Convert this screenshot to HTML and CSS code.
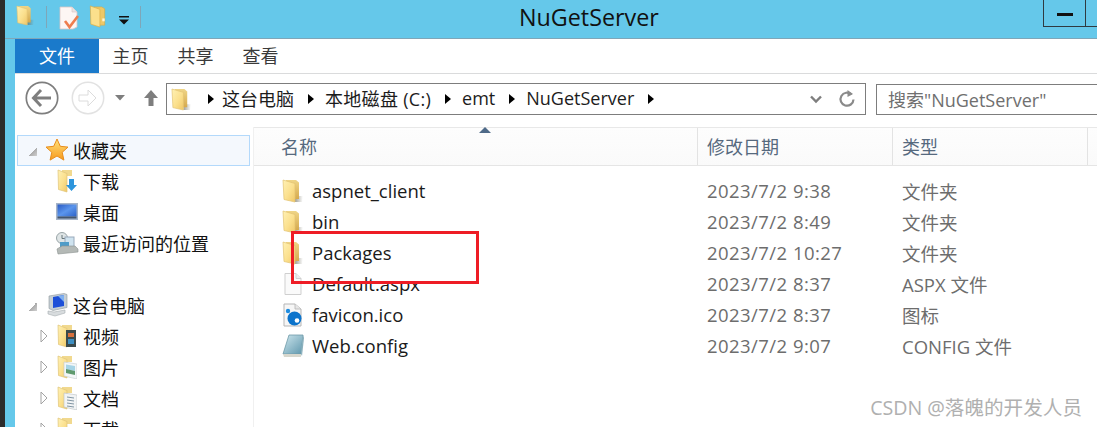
FILE: index.html
```html
<!DOCTYPE html>
<html lang="zh-CN">
<head>
<meta charset="utf-8">
<title>NuGetServer</title>
<link rel="stylesheet" href="styles.css">
</head>
<body>
<svg class="defs" aria-hidden="true">
  <defs>
    <linearGradient id="leaf" x1="0" y1="0" x2="1" y2="1">
      <stop offset="0" stop-color="#fff1b4"/><stop offset=".55" stop-color="#fbe08e"/><stop offset="1" stop-color="#efc767"/>
    </linearGradient>
    <linearGradient id="back" x1="0" y1="0" x2="0" y2="1">
      <stop offset="0" stop-color="#efd587"/><stop offset="1" stop-color="#d6aa4e"/>
    </linearGradient>
    <linearGradient id="shade" x1="0" y1="0" x2="1" y2="0">
      <stop offset="0" stop-color="#5c5c50" stop-opacity=".6"/><stop offset="1" stop-color="#6c6c5c" stop-opacity="0"/>
    </linearGradient>
    <linearGradient id="screen" x1="0" y1="0" x2="1" y2="1">
      <stop offset="0" stop-color="#2a5bc4"/><stop offset=".5" stop-color="#5b95ec"/><stop offset="1" stop-color="#2d62c8"/>
    </linearGradient>
    <linearGradient id="star" x1="0" y1="0" x2="0" y2="1">
      <stop offset="0" stop-color="#ffe27a"/><stop offset="1" stop-color="#f79a1e"/>
    </linearGradient>
    <linearGradient id="pad" x1="0" y1="0" x2="1" y2="1">
      <stop offset="0" stop-color="#cfe7ee"/><stop offset="1" stop-color="#5f97ad"/>
    </linearGradient>
    <symbol id="folder" viewBox="0 0 22 24">
      <path d="M13 17h8l-1 6h-7z" fill="url(#shade)"/>
      <path d="M4 1h10l3 2.500V20H4z" fill="url(#back)"/>
      <path d="M1 1l12 3.500V23L2 20.500z" fill="url(#leaf)" stroke="#e2c372" stroke-width=".7"/>
    </symbol>
    <symbol id="tree-folder" viewBox="0 0 20 24">
      <path d="M5 1h10v6H5z" fill="#f1d98f"/>
      <path d="M1 1l9 3.500V23l-8.500-2.500z" fill="url(#leaf)" stroke="#dfc478" stroke-width=".7"/>
    </symbol>
  </defs>
</svg>

<div class="page">
  <div class="dark-edge"></div>
  <div class="window">
    <header class="titlebar">
      <div class="quick">
        <svg class="q-folder" viewBox="0 0 22 24"><use href="#folder"/></svg>
        <span class="q-sep"></span>
        <svg class="q-doc" viewBox="0 0 20 24">
          <path d="M1 1h12l5 5v15l-4 2H1z" fill="#fdf6f4" stroke="#d9c5c4" stroke-width=".8"/>
          <path d="M13 1v5h5" fill="#ece3e2" stroke="#d9c5c4" stroke-width=".6"/>
          <path d="M6 15l4.500 6L19 10" fill="none" stroke="#ee7d4e" stroke-width="2.600"/>
        </svg>
        <svg class="q-folder2" viewBox="0 0 18 24">
          <path d="M5 2h8l3 2v17H5z" fill="#eec868" stroke="#d9a93f" stroke-width=".6"/>
          <path d="M1 1l10 3.500V23L1.500 20z" fill="#fbe08c" stroke="#dcae45" stroke-width=".7"/>
          <rect x="13.500" y="14" width="2.500" height="3" fill="#fff6d8"/>
        </svg>
        <svg class="q-drop" viewBox="0 0 10 9"><path d="M0 0h10v1.500H0zM0 3.500h10L5 8.500z" fill="#111"/></svg>
        <span class="q-sep q-sep-last"></span>
      </div>
      <h1 class="title">NuGetServer</h1>
      <div class="controls">
        <div class="ctl ctl-min"><span class="min-bar"></span></div>
        <div class="ctl ctl-max"></div>
      </div>
    </header>

    <div class="content">
      <nav class="ribbon">
        <span class="tab tab-file">文件</span>
        <span class="tab">主页</span>
        <span class="tab">共享</span>
        <span class="tab">查看</span>
      </nav>

      <div class="toolbar">
        <svg class="nav-back" viewBox="0 0 34 34">
          <circle cx="17" cy="17" r="15.700" fill="#fff" stroke="#7e7e7e" stroke-width="1.700"/>
          <path d="M16 9l-7.500 8 7.500 8M9 17h17" fill="none" stroke="#7e7e7e" stroke-width="3"/>
        </svg>
        <svg class="nav-fwd" viewBox="0 0 34 34">
          <circle cx="17" cy="17" r="15.700" fill="#fff" stroke="#e2e2e2" stroke-width="1.500"/>
          <path d="M8 14h9V9l8 8-8 8v-5H8z" fill="#fff" stroke="#dcdcdc"/>
        </svg>
        <svg class="nav-drop" viewBox="0 0 10 6"><path d="M0 0h10L5 5.500z" fill="#7e7e7e"/></svg>
        <svg class="nav-up" viewBox="0 0 16 18"><path d="M8 1l7 8h-4.500v8h-5V9H1z" fill="#7e7e7e"/></svg>
        <div class="address">
          <svg class="addr-folder" viewBox="0 0 22 24"><use href="#folder"/></svg>
          <span class="crumb-arrow"></span>
          <span class="crumb">这台电脑</span>
          <span class="crumb-arrow"></span>
          <span class="crumb crumb-drive">本地磁盘 (C:)</span>
          <span class="crumb-arrow"></span>
          <span class="crumb">emt</span>
          <span class="crumb-arrow"></span>
          <span class="crumb">NuGetServer</span>
          <span class="crumb-arrow"></span>
          <span class="addr-fill"></span>
          <svg class="addr-chev" viewBox="0 0 12 9"><path d="M1 1.500l5 5 5-5" fill="none" stroke="#7e7e7e" stroke-width="2.400"/></svg>
          <svg class="addr-refresh" viewBox="0 0 18 18"><path d="M13.500 4.500a6.500 6.500 0 1 0 2 5" fill="none" stroke="#8a8a8a" stroke-width="2.200"/><path d="M9.500 0v7l5.500-3z" fill="#8a8a8a"/></svg>
        </div>
        <div class="search">搜索"NuGetServer"</div>
      </div>

      <div class="panes">
        <aside class="tree">
          <div class="tree-row selected"><span class="exp open"></span>
            <svg class="t-star" viewBox="0 0 24 24"><path d="M12 1l3.300 7.300 7.700.8-5.800 5.200 1.700 7.800L12 18l-6.900 4.100 1.700-7.800L1 9.100l7.700-.8z" fill="url(#star)" stroke="#e88d1c"/></svg>
            <span class="t-label">收藏夹</span></div>
          <div class="tree-row"><span class="exp none"></span>
            <svg class="t-icon" viewBox="0 0 20 24"><use href="#tree-folder"/><path d="M12 10h5v6h3l-5.500 6-5.500-6h3z" fill="#2d95dc"/></svg>
            <span class="t-label sub-label">下载</span></div>
          <div class="tree-row"><span class="exp none"></span>
            <svg class="t-icon wide" viewBox="0 0 24 20"><rect x="1" y="1" width="22" height="17" fill="#a6b4c8"/><rect x="2.500" y="2.500" width="19" height="12" fill="url(#screen)"/><rect x="2.500" y="14.500" width="19" height="2" fill="#44566e"/></svg>
            <span class="t-label wide-label">桌面</span></div>
          <div class="tree-row"><span class="exp none"></span>
            <svg class="t-icon wide" viewBox="0 0 24 24"><circle cx="7" cy="7" r="5.500" fill="#dfe5e6" stroke="#9aa5a8"/><path d="M7 4v3.500h3" fill="none" stroke="#67767a"/><rect x="10" y="6" width="9" height="10" fill="#cfe3ef" stroke="#9ab"/><rect x="5" y="11" width="9" height="7" fill="#4f9cc8"/><path d="M2 18l5-3h13l3 3v3l-20 2z" fill="#b4b9b6" stroke="#8c9290" stroke-width=".6"/></svg>
            <span class="t-label wide-label">最近访问的位置</span></div>
          <div class="tree-gap"></div>
          <div class="tree-row"><span class="exp open"></span>
            <svg class="t-star" viewBox="0 0 24 24"><path d="M4 3l15-2.500 3 1v13l-14 3-4-2z" fill="#c5ced4" stroke="#8d979c" stroke-width=".6"/><path d="M8 4l11-2v11L8 15z" fill="#1d4fd8"/><path d="M13 3l6-1v7z" fill="#7fb0f0"/><path d="M3 18l6 1 11-2v3l-10 3-7-2z" fill="#d8dcde" stroke="#a6adb0" stroke-width=".6"/></svg>
            <span class="t-label">这台电脑</span></div>
          <div class="tree-row"><svg class="exp-closed" viewBox="0 0 8 14"><path d="M1 1l6 6-6 6z" fill="#fff" stroke="#a3a3a3"/></svg>
            <svg class="t-icon" viewBox="0 0 20 24"><use href="#tree-folder"/><rect x="9" y="6" width="10" height="17" fill="#3b4a4c"/><rect x="11" y="9" width="6" height="4" fill="#d6703e"/><rect x="11" y="15" width="6" height="5" fill="#3e8fc2"/></svg>
            <span class="t-label sub-label">视频</span></div>
          <div class="tree-row"><svg class="exp-closed" viewBox="0 0 8 14"><path d="M1 1l6 6-6 6z" fill="#fff" stroke="#a3a3a3"/></svg>
            <svg class="t-icon" viewBox="0 0 20 24"><use href="#tree-folder"/><path d="M7 7l13 2v15L7 21z" fill="#f2f6f7" stroke="#c3cbce" stroke-width=".6"/><path d="M9 9.500l9 1.500v5l-9-1.500z" fill="#a6d4e6"/><path d="M9 14l9 2v4l-9-2z" fill="#5f9a6e"/></svg>
            <span class="t-label sub-label">图片</span></div>
          <div class="tree-row"><svg class="exp-closed" viewBox="0 0 8 14"><path d="M1 1l6 6-6 6z" fill="#fff" stroke="#a3a3a3"/></svg>
            <svg class="t-icon" viewBox="0 0 20 24"><use href="#tree-folder"/><path d="M7 7l13 2v15L7 21z" fill="#f2f4f5" stroke="#b8bfc2" stroke-width=".6"/><path d="M10 11l7 1M10 14l7 1M10 17l7 1M10 20l7 1" stroke="#8296a4" stroke-width="1"/></svg>
            <span class="t-label sub-label">文档</span></div>
          <div class="tree-row"><svg class="exp-closed" viewBox="0 0 8 14"><path d="M1 1l6 6-6 6z" fill="#fff" stroke="#a3a3a3"/></svg>
            <svg class="t-icon" viewBox="0 0 20 24"><use href="#tree-folder"/><path d="M12 10h5v6h3l-5.500 6-5.500-6h3z" fill="#2d95dc"/></svg>
            <span class="t-label sub-label">下载</span></div>
        </aside>

        <main class="files">
          <div class="sort-mark"></div>
          <div class="cols">
            <div class="col col-name">名称</div>
            <div class="col col-date">修改日期</div>
            <div class="col col-type">类型</div>
            <div class="col col-rest"></div>
          </div>
          <div class="rows">
            <div class="row"><span class="name"><svg class="f-icon" viewBox="0 0 22 24"><use href="#folder"/></svg>aspnet_client</span><span class="date">2023/7/2 9:38</span><span class="type">文件夹</span></div>
            <div class="row"><span class="name"><svg class="f-icon" viewBox="0 0 22 24"><use href="#folder"/></svg>bin</span><span class="date">2023/7/2 8:49</span><span class="type">文件夹</span></div>
            <div class="row"><span class="name"><svg class="f-icon" viewBox="0 0 22 24"><use href="#folder"/></svg>Packages</span><span class="date">2023/7/2 10:27</span><span class="type">文件夹</span></div>
            <div class="row"><span class="name"><svg class="f-icon" viewBox="0 0 22 24"><path d="M3 1.500h11l5 5v16H3z" fill="#fafafa" stroke="#cfcfcf"/><path d="M14 1.500v5h5" fill="#ececec" stroke="#cfcfcf"/></svg>Default.aspx</span><span class="date">2023/7/2 8:37</span><span class="type">ASPX 文件</span></div>
            <div class="row"><span class="name"><svg class="f-icon" viewBox="0 0 22 24"><path d="M2 1h11l6 5v17H2z" fill="#f6f6f6" stroke="#b5b5b5"/><path d="M13 1v5h6" fill="#e6e6e6" stroke="#b5b5b5" stroke-width=".8"/><circle cx="12.500" cy="15.500" r="7" fill="#0c74cc"/><circle cx="15" cy="17.500" r="2.300" fill="#fff"/><circle cx="6" cy="8" r="2.200" fill="#1f8de0"/></svg>favicon.ico</span><span class="date">2023/7/2 8:37</span><span class="type">图标</span></div>
            <div class="row"><span class="name"><svg class="f-icon" viewBox="0 0 22 24"><path d="M7 1h14l-2 19H1z" fill="url(#pad)" stroke="#6f9aa8" stroke-width=".8"/><path d="M19 20H1l1 3h17z" fill="#d7d7cd"/><path d="M21 1l1 3-2 18-1-2z" fill="#8ab0bd"/></svg>Web.config</span><span class="date">2023/7/2 9:07</span><span class="type">CONFIG 文件</span></div>
          </div>
        </main>
      </div>
    </div>
  </div>
  <div class="red-box"></div>
  <div class="watermark">CSDN @落魄的开发人员</div>
</div>
</body>
</html>
```

FILE: styles.css
```css
* { box-sizing: border-box; }
html, body { margin: 0; padding: 0; }
body {
  width: 1097px;
  height: 427px;
  overflow: hidden;
  background: #fff;
  font-family: "Open Sans", "Noto Sans CJK SC", sans-serif;
  color: #111;
}
.defs { display: block; width: 0; height: 0; }

.page { position: relative; display: flex; width: 1097px; height: 427px; overflow: hidden; }
.dark-edge { flex: 0 0 5px; background: #2b2b2b; }
.window { flex: 1; min-width: 0; display: flex; flex-direction: column; background: #65c8ea; }

/* title bar */
.titlebar { flex: 0 0 39px; display: flex; align-items: flex-start; padding-left: 11px; border-bottom: 1px solid #7fa6b8; }
.quick { flex: none; width: 125px; display: flex; align-items: flex-start; }
.q-folder { width: 19px; height: 23px; margin-top: 4px; }
.q-sep { width: 1px; height: 22px; margin: 6px 0 0 11px; background: #7ea6b8; }
.q-doc { width: 20px; height: 24px; margin: 6px 0 0 12px; }
.q-folder2 { width: 18px; height: 23px; margin: 5px 0 0 10px; }
.q-drop { width: 10px; height: 9px; margin: 16px 0 0 12px; }
.title { margin: 0 0 0 378px; font-size: 23.3px; line-height: 34px; font-weight: 400; color: #111; white-space: nowrap; }
.controls { margin-left: auto; display: flex; }
.ctl { height: 27px; border: 1px solid #2f3a40; border-top: 0; }
.ctl-min { width: 43px; display: flex; justify-content: center; padding-top: 13px; }
.ctl-max { width: 12px; margin-left: -1px; border-right: 0; }
.min-bar { width: 16px; height: 3px; background: #111; }

/* white area */
.content { flex: 1; min-height: 0; margin-left: 10px; background: #fff; display: flex; flex-direction: column; }
.ribbon { flex: 0 0 35px; display: flex; align-items: stretch; border-bottom: 1px solid #dadbdc; }
.tab { width: 65px; display: flex; align-items: center; justify-content: center; font-size: 18px; color: #3a3a3a; padding-bottom: 2px; }
.tab-file { width: 84px; margin-right: -1px; height: 34px; background: #1a7acb; color: #fff; }

.toolbar { flex: 0 0 53px; display: flex; align-items: flex-start; }
.nav-back { flex: none; width: 34px; height: 34px; margin: 7px 0 0 10px; }
.nav-fwd { flex: none; width: 34px; height: 34px; margin: 7px 0 0 12px; }
.nav-drop { flex: none; width: 10px; height: 6px; margin: 21px 0 0 10px; }
.nav-up { flex: none; width: 16px; height: 18px; margin: 15px 0 0 18px; }
.address {
  flex: none;
  width: 700px; height: 32px; margin: 9px 0 0 7px;
  display: flex; align-items: center;
  border: 1px solid #7d7d7d; padding: 0 3px 0 4px;
  font-size: 18px; color: #1c1c1c; white-space: nowrap;
}
.addr-folder { flex: none; width: 21px; height: 23px; margin-right: 2px; }
.crumb { padding-bottom: 2px; }
.crumb-drive { letter-spacing: .3px; }
.crumb-arrow { flex: none; width: 0; height: 0; margin: 0 11px 0 14px; border-left: 6px solid #000; border-top: 5px solid transparent; border-bottom: 5px solid transparent; }
.addr-folder + .crumb-arrow { margin-right: 8px; }
.addr-fill { flex: 1; }
.addr-chev { flex: none; width: 12px; height: 9px; margin-right: 16px; }
.addr-refresh { flex: none; width: 18px; height: 18px; margin-right: 6px; }
.search {
  flex: none;
  width: 240px; height: 31px; margin: 10px 0 0 10px;
  border: 1px solid #7d7d7d; padding: 0 0 2px 11px;
  display: flex; align-items: center;
  font-size: 18px; color: #6f6f6f; white-space: nowrap;
}

.panes { flex: 1; min-height: 0; display: flex; }

/* tree */
.tree { flex: 0 0 239px; padding: 8px 0 0 2px; border-right: 1px solid #f0f0f0; }
.tree-row { height: 31px; display: flex; align-items: center; font-size: 18px; color: #111; border: 1px solid transparent; margin-right: 3px; padding: 0 0 1px 10px; }
.tree-row.selected { background: #f4f8fd; border-color: #b3d9fb; }
.tree-gap { height: 31px; }
.exp { flex: none; }
.exp.open { background: linear-gradient(135deg, transparent 50%, #a9a9a9 50%, #d0d0d0 100%); width: 9px; height: 9px; margin: 2px 4px 0 0; }
.exp.none { width: 26px; height: 1px; }
.exp-closed { flex: none; width: 8px; height: 14px; margin: 0 6px 0 12px; }
.t-star { flex: none; width: 24px; height: 24px; margin-left: 4px; }
.t-label { margin-left: 4px; white-space: nowrap; }
.sub-label { margin-left: 6px; }
.wide-label { margin-left: 4px; }
.t-icon { flex: none; width: 20px; height: 24px; margin-left: 3px; }
.t-icon.wide { width: 24px; margin-left: 1px; }

/* files */
.files { position: relative; flex: 1; min-width: 0; }
.sort-mark { position: absolute; left: 225px; top: 0; width: 0; height: 0; border-left: 6px solid transparent; border-right: 6px solid transparent; border-bottom: 6px solid #4f6a88; }
.cols { height: 39px; display: flex; border-bottom: 1px solid #e5e5e5; background: linear-gradient(#fdfdfd, #fafafa); border-top: 1px solid #e8e8e8; font-size: 18px; color: #56697e; }
.col { display: flex; align-items: center; padding-left: 9px; border-right: 1px solid #e3e3e3; padding-bottom: 2px; }
.col-name { width: 444px; padding-left: 27px; }
.col-date { width: 195px; }
.col-type { width: 195px; }
.col-rest { flex: 1; border-right: 0; }
.rows { padding-top: 9px; }
.row { height: 31px; display: flex; align-items: center; font-size: 18.5px; }
.row span { white-space: nowrap; }
.name { flex: none; width: 444px; padding-left: 28px; display: flex; align-items: center; color: #1a1a1a; }
.f-icon { width: 22px; height: 24px; margin-right: 8px; flex: none; }
.date { flex: none; width: 195px; padding-left: 9px; color: #6d6d6d; letter-spacing: .45px; }
.type { padding-left: 9px; color: #6d6d6d; }

/* overlays */
.red-box { position: absolute; left: 291px; top: 231px; width: 188px; height: 53px; border: 3px solid #ee1c25; }
.watermark { position: absolute; right: 15px; top: 395px; font-size: 19.6px; line-height: 25px; color: #b0b0b0; white-space: nowrap; }
```
